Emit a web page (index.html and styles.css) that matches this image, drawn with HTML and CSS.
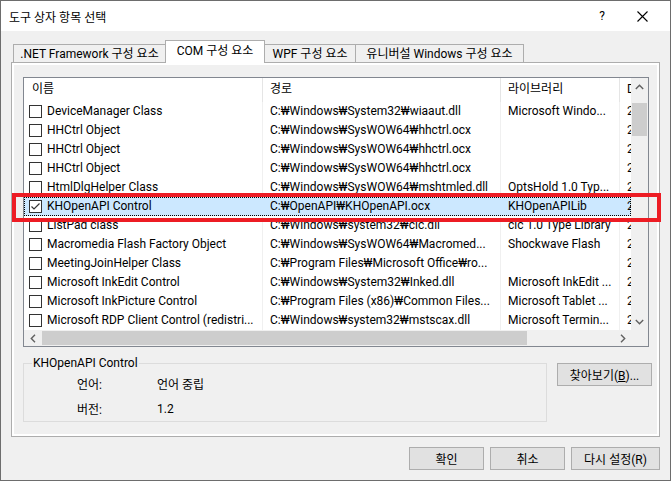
FILE: index.html
```html
<!DOCTYPE html>
<html lang="ko">
<head>
<meta charset="utf-8">
<title>도구 상자 항목 선택</title>
<link rel="stylesheet" href="styles.css">
</head>
<body>
<div class="window">
  <div class="titlebar">
    <span class="title">도구 상자 항목 선택</span>
    <span class="help">?</span>
    <span class="close"><svg width="11" height="11" viewBox="0 0 11 11"><path d="M0.5 0.5 L10.5 10.5 M10.5 0.5 L0.5 10.5" stroke="#000" stroke-width="1.1" fill="none"/></svg></span>
  </div>
  <div class="client">
    <div class="tabs">
      <div class="tab t1">.NET Framework 구성 요소</div>
      <div class="tab t2 active">COM 구성 요소</div>
      <div class="tab t3">WPF 구성 요소</div>
      <div class="tab t4">유니버설 Windows 구성 요소</div>
    </div>
    <div class="panel">
      <div class="page">
        <div class="listview">
          <div class="lv-top">
            <div class="lv-content">
              <div class="lv-header">
                <div class="cell c1">이름</div>
                <div class="cell c2">경로</div>
                <div class="cell c3">라이브러리</div>
                <div class="cell c4">D</div>
              </div>
              <div class="row"><div class="cell c1"><span class="cb"></span>DeviceManager Class</div><div class="cell c2">C:₩Windows₩System32₩wiaaut.dll</div><div class="cell c3">Microsoft Windo...</div><div class="cell c4">2</div></div>
              <div class="row"><div class="cell c1"><span class="cb"></span>HHCtrl Object</div><div class="cell c2">C:₩Windows₩SysWOW64₩hhctrl.ocx</div><div class="cell c3"></div><div class="cell c4">2</div></div>
              <div class="row"><div class="cell c1"><span class="cb"></span>HHCtrl Object</div><div class="cell c2">C:₩Windows₩SysWOW64₩hhctrl.ocx</div><div class="cell c3"></div><div class="cell c4">2</div></div>
              <div class="row"><div class="cell c1"><span class="cb"></span>HHCtrl Object</div><div class="cell c2">C:₩Windows₩SysWOW64₩hhctrl.ocx</div><div class="cell c3"></div><div class="cell c4">2</div></div>
              <div class="row"><div class="cell c1"><span class="cb"></span>HtmlDlgHelper Class</div><div class="cell c2">C:₩Windows₩SysWOW64₩mshtmled.dll</div><div class="cell c3">OptsHold 1.0 Typ...</div><div class="cell c4">2</div></div>
              <div class="row selected"><div class="cell c1"><span class="cb checked"><svg width="11" height="11" viewBox="0 0 11 11"><path d="M1.5 5.5 L4 8 L9.5 2.5" stroke="#333" stroke-width="1.2" fill="none"/></svg></span>KHOpenAPI Control</div><div class="cell c2">C:₩OpenAPI₩KHOpenAPI.ocx</div><div class="cell c3">KHOpenAPILib</div><div class="cell c4">2</div></div>
              <div class="row"><div class="cell c1"><span class="cb"></span>ListPad class</div><div class="cell c2">C:₩Windows₩system32₩cic.dll</div><div class="cell c3">cic 1.0 Type Library</div><div class="cell c4">2</div></div>
              <div class="row"><div class="cell c1"><span class="cb"></span>Macromedia Flash Factory Object</div><div class="cell c2">C:₩Windows₩SysWOW64₩Macromed...</div><div class="cell c3">Shockwave Flash</div><div class="cell c4">2</div></div>
              <div class="row"><div class="cell c1"><span class="cb"></span>MeetingJoinHelper Class</div><div class="cell c2">C:₩Program Files₩Microsoft Office₩ro...</div><div class="cell c3"></div><div class="cell c4">2</div></div>
              <div class="row"><div class="cell c1"><span class="cb"></span>Microsoft InkEdit Control</div><div class="cell c2">C:₩Windows₩System32₩Inked.dll</div><div class="cell c3">Microsoft InkEdit ...</div><div class="cell c4">2</div></div>
              <div class="row"><div class="cell c1"><span class="cb"></span>Microsoft InkPicture Control</div><div class="cell c2">C:₩Program Files (x86)₩Common Files...</div><div class="cell c3">Microsoft Tablet ...</div><div class="cell c4">2</div></div>
              <div class="row"><div class="cell c1"><span class="cb"></span>Microsoft RDP Client Control (redistri...</div><div class="cell c2">C:₩Windows₩system32₩mstscax.dll</div><div class="cell c3">Microsoft Termin...</div><div class="cell c4">2</div></div>
            </div>
            <div class="vscroll">
              <div class="arrow"><svg width="9" height="6" viewBox="0 0 9 6"><path d="M0.8 5 L4.5 1.3 L8.2 5" stroke="#606060" stroke-width="1.4" fill="none"/></svg></div>
              <div class="vtrack"><div class="vthumb"></div></div>
              <div class="arrow"><svg width="9" height="6" viewBox="0 0 9 6"><path d="M0.8 1 L4.5 4.7 L8.2 1" stroke="#606060" stroke-width="1.4" fill="none"/></svg></div>
            </div>
          </div>
          <div class="lv-bottom">
            <div class="hscroll">
              <div class="harrow"><svg width="6" height="9" viewBox="0 0 6 9"><path d="M5 0.8 L1.3 4.5 L5 8.2" stroke="#606060" stroke-width="1.4" fill="none"/></svg></div>
              <div class="htrack"><div class="hthumb"></div></div>
              <div class="harrow"><svg width="6" height="9" viewBox="0 0 6 9"><path d="M1 0.8 L4.7 4.5 L1 8.2" stroke="#606060" stroke-width="1.4" fill="none"/></svg></div>
            </div>
            <div class="corner"></div>
          </div>
        </div>
        <div class="details">
          <div class="group">
            <span class="legend">KHOpenAPI Control</span>
            <div class="props">
              <span>언어:</span><span>언어 중립</span>
              <span>버전:</span><span>1.2</span>
            </div>
          </div>
          <button class="btn browse">찾아보기(<u>B</u>)...</button>
        </div>
      </div>
    </div>
    <div class="buttons">
      <button class="btn ok">확인</button>
      <button class="btn cancel">취소</button>
      <button class="btn reset">다시 설정(R)</button>
    </div>
  </div>
  <div class="redbox"></div>
</div>
</body>
</html>
```
FILE: styles.css
```css
* { box-sizing: border-box; }
html, body { margin: 0; padding: 0; }
body {
  background: #f0f0f0;
  font-family: Roboto, "Noto Sans CJK KR", sans-serif;
  font-size: 12px;
  color: #000;
}
.window {
  position: relative;
  width: 671px;
  height: 481px;
  border: 1px solid #6d6d6d;
  background: #f0f0f0;
  overflow: hidden;
}
.titlebar {
  height: 30px;
  background: #fff;
  display: flex;
  align-items: center;
}
.title { flex: 1; padding-left: 8px; font-size: 12px; }
.help { width: 20px; text-align: center; margin-right: 7px; font-size: 12px; }
.close { width: 46px; display: flex; justify-content: center; margin-right: 5px; }
.close svg { display: block; }

.client { padding: 9px 10px 0 10px; }

.tabs {
  display: flex;
  align-items: flex-end;
  height: 22px;
  padding-left: 2px;
}
.tab {
  height: 18px;
  border: 1px solid #adadad;
  border-bottom: none;
  background: #f0f0f0;
  display: flex;
  align-items: center;
  justify-content: center;
  white-space: nowrap;
  line-height: 16px;
}
.t1 { width: 153px; }
.t2 { width: 100px; margin-left: -1px; }
.t3 { width: 92px; margin-left: -1px; }
.t4 { width: 169px; margin-left: -1px; }
.tab.active {
  position: relative;
  z-index: 1;
  height: 23px;
  margin-bottom: -1px;
  background: #fff;
  padding-bottom: 2px;
}

.panel {
  width: 649px;
  height: 375px;
  border: 1px solid #adadad;
  background: #fff;
  padding: 2px;
}
.page {
  height: 100%;
  background: #f0f0f0;
  padding: 12px 0 0 9px;
}

.listview {
  width: 626px;
  height: 270px;
  border: 1px solid #828790;
  background: #fff;
  display: flex;
  flex-direction: column;
}
.lv-top { display: flex; height: 252px; }
.lv-content { width: 607px; overflow: hidden; }
.lv-header { display: flex; height: 24px; line-height: 23px; }
.lv-header .cell { border-right: 1px solid #e5e5e5; }
.cell {
  white-space: nowrap;
  overflow: hidden;
  padding-left: 7px;
  border-right: 1px solid #f0f0f0;
}
.c1 { width: 239px; }
.c2 { width: 238px; }
.c3 { width: 119px; }
.c4 { width: 11px; border-right: none !important; }
.lv-header .c1 { padding-left: 8px; }
.row { display: flex; height: 19px; line-height: 19px; }
.row .c1 { padding-left: 5px; display: flex; align-items: center; }
.cb {
  width: 13px;
  height: 13px;
  border: 1px solid #333;
  background: #fff;
  margin-right: 5px;
  flex: none;
  display: flex;
  align-items: center;
  justify-content: center;
}
.cb svg { display: block; }
.row.selected {
  background: #cce8ff;
  outline: 1px dotted #000;
  outline-offset: -1px;
}
.row.selected .cell { border-right-color: #cce8ff; }

.vscroll {
  width: 17px;
  background: #f0f0f0;
  display: flex;
  flex-direction: column;
}
.arrow {
  height: 17px;
  display: flex;
  align-items: center;
  justify-content: center;
}
.vtrack { flex: 1; padding: 8px 1px 0 1px; }
.vthumb { height: 33px; background: #cdcdcd; }

.lv-bottom { display: flex; height: 16px; }
.hscroll {
  width: 607px;
  display: flex;
  background: #f0f0f0;
}
.harrow {
  width: 17px;
  display: flex;
  align-items: center;
  justify-content: center;
}
.htrack { flex: 1; padding: 1px 0 1px 1px; }
.hthumb { width: 485px; height: 100%; background: #cdcdcd; }
.corner { width: 17px; background: #f0f0f0; }

.details { display: flex; align-items: flex-start; margin-top: 16px; }
.group {
  position: relative;
  width: 524px;
  height: 59px;
  border: 1px solid #dcdcdc;
  padding: 7px 0 0 53px;
}
.legend {
  position: absolute;
  top: -9px;
  left: 8px;
  padding: 0 1px;
  background: #f0f0f0;
  line-height: 16px;
}
.props {
  display: grid;
  grid-template-columns: 80px auto;
  grid-auto-rows: 25px;
  align-items: center;
}

.btn {
  font-family: Roboto, "Noto Sans CJK KR", sans-serif;
  font-size: 12px;
  color: #000;
  height: 23px;
  border: 1px solid #adadad;
  background: #e1e1e1;
  padding: 0;
  white-space: nowrap;
}
.browse { width: 95px; margin-left: 10px; }
.buttons {
  display: flex;
  justify-content: flex-end;
  gap: 6px;
  margin-top: 10px;
}
.ok, .cancel { width: 75px; }
.reset { width: 89px; }

.redbox {
  position: absolute;
  left: 11px;
  top: 192px;
  width: 649px;
  height: 29px;
  border: 4px solid #ed1c24;
}
```
